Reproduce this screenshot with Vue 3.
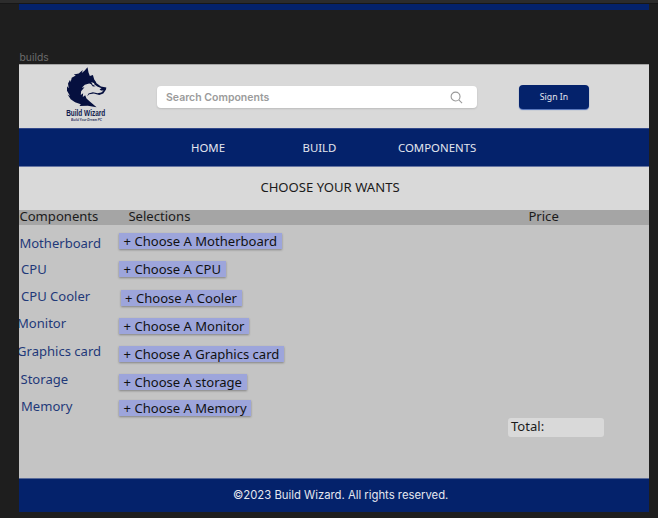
<script setup>
const links = ['HOME', 'BUILD', 'COMPONENTS']

const rows = [
  { label: 'Motherboard', choice: '+ Choose A Motherboard', labelStep: 26, chipStep: 27.5, labelX: 0.4, chipX: 0, chipW: 163 },
  { label: 'CPU', choice: '+ Choose A CPU', labelStep: 26.7, chipStep: 29, labelX: 2, chipX: 0, chipW: 107 },
  { label: 'CPU Cooler', choice: '+ Choose A Cooler', labelStep: 27.6, chipStep: 28, labelX: 2, chipX: 1.5, chipW: 121 },
  { label: 'Monitor', choice: '+ Choose A Monitor', labelStep: 28.2, chipStep: 28, labelX: -2, chipX: 0, chipW: 130 },
  { label: 'Graphics card', choice: '+ Choose A Graphics card', labelStep: 28, chipStep: 28, labelX: -2, chipX: 0, chipW: 165 },
  { label: 'Storage', choice: '+ Choose A storage', labelStep: 26.6, chipStep: 26.7, labelX: 1.5, chipX: 0, chipW: 128 },
  { label: 'Memory', choice: '+ Choose A Memory', labelStep: 20, chipStep: 20, labelX: 2, chipX: 0, chipW: 132 },
]
</script>

<template>
  <div class="canvas">
    <div class="topline"></div>
    <div class="previous"></div>
    <div class="frame-name">builds</div>
    <main class="frame">
      <header class="header">
        <div class="logo">
          <svg class="wolf" viewBox="197 200 122 122" aria-hidden="true">
            <path fill="#06103f" d="M261 201 L264 216 L268 227 L277 224 L281 237 L287 246 L285 250 L272 245 L276 252 L266 249 L253 253 L244 262 L252 260 L242 272 L241 283 L248 278 L247 289 L254 284 L258 294 L267 302 L288 320 L262 315 L237 316 L241 311 L224 305 L211 296 L202 282 L209 286 L200 271 L200 257 L205 263 L203 249 L209 238 L211 245 L214 232 L226 225 L220 222 L235 219 L247 209 L244 218 L252 211 Z" />
            <path fill="#06103f" d="M281 240 L288 248 L301 258 L317 261 L316 267 L308 279 L296 283 L280 279 L266 281 L260 287 L264 279 L277 275 L291 278 L302 276 L309 270 L301 270 L297 266 L303 263 L290 258 L281 251 Z" />
            <path fill="#06103f" d="M270 249 L285 257 L277 258 Z" />
          </svg>
          <div class="brand">Build Wizard</div>
          <div class="motto">Build Your Dream PC</div>
        </div>
        <div class="search">
          <span>Search Components</span>
          <svg class="glass" viewBox="0 0 14 14" aria-hidden="true">
            <circle cx="6" cy="6" r="4.8" />
            <path d="M9.5 9.5 L13 13" />
          </svg>
        </div>
        <button class="signin">Sign In</button>
      </header>
      <nav class="nav">
        <a v-for="link in links" :key="link">{{ link }}</a>
      </nav>
      <h1 class="title">CHOOSE YOUR WANTS</h1>
      <div class="thead">
        <span>Components</span>
        <span>Selections</span>
        <span>Price</span>
      </div>
      <section class="body">
        <div class="labels">
          <div v-for="r in rows" :key="r.label" class="slot" :style="{ height: r.labelStep + 'px', marginLeft: r.labelX + 'px' }">{{ r.label }}</div>
        </div>
        <div class="chips">
          <div v-for="r in rows" :key="r.choice" class="slot" :style="{ height: r.chipStep + 'px', marginLeft: r.chipX + 'px' }">
            <span class="chip" :style="{ width: r.chipW + 'px' }">{{ r.choice }}</span>
          </div>
        </div>
        <div class="total">Total:</div>
      </section>
      <footer class="footer">©2023 Build Wizard. All rights reserved.</footer>
    </main>
  </div>
</template>

<style>
body { margin: 0; background: #1e1e1e; }
</style>

<style scoped>
.canvas { box-sizing: border-box; width: 658px; height: 518px; background: #1e1e1e; overflow: hidden; font-family: "Noto Sans", sans-serif; }
.topline { height: 3px; background: #2c2c2c; border-bottom: 1px solid #171717; }
.previous { width: 630px; height: 6px; margin-left: 19px; background: #04226b; }
.frame-name { height: 14px; margin: 40px 0 0 19.5px; font: 10.3px/14px Inter, sans-serif; color: #6c6c6c; }
.frame { display: flex; flex-direction: column; width: 630px; height: 448px; margin-left: 19px; background: #c4c4c4; overflow: hidden; }
.header { box-sizing: border-box; display: flex; height: 64px; background: #d9d9d9; border-top: 1px solid #a5a5a5; }
.logo { width: 44px; margin: 2px 0 0 45px; display: flex; flex-direction: column; align-items: center; white-space: nowrap; }
.wolf { width: 41px; height: 41px; flex: none; }
.brand { font: bold 8.5px/10px "Liberation Sans", sans-serif; color: #101b4d; transform: scaleX(.76); margin-top: 0; }
.motto { font: italic bold 3.5px/5px "Liberation Sans", sans-serif; color: #2c3562; transform: scaleX(.88); margin-left: 2px; }
.search { box-sizing: border-box; display: flex; align-items: center; justify-content: space-between; width: 320px; height: 22px; margin: 21px 0 0 49px; padding: 0 14px 0 9px; background: #fff; border-radius: 4px; box-shadow: 0 1px 2px #0002; font: 600 10.5px/22px Inter, sans-serif; color: #9b9b9b; }
.search span { padding-top: 1px; }
.glass { width: 13px; height: 13px; fill: none; stroke: #999; stroke-width: 1.2; }
.signin { width: 70px; height: 24px; margin: 20px 0 0 42px; padding: 0; border: 0; border-radius: 4px; background: #04226b; box-shadow: 0 1px 1px #4c6dba; color: #e4e7ef; font: 8.7px/24px "Noto Sans", sans-serif; }
.nav { box-sizing: border-box; display: grid; grid-template-columns: 111.5px 95.5px 1fr; height: 39px; padding-left: 172px; background: #04226b; border-top: 1px solid #32488a; border-bottom: 1px solid #6675a2; color: #e4e7ef; font-size: 11.4px; line-height: 37px; }
.title { height: 43px; margin: 0; padding-right: 8px; background: #d9d9d9; text-align: center; font-weight: 400; font-size: 13.1px; line-height: 40px; color: #1b1b1b; }
.thead { display: grid; grid-template-columns: 109px 400px 1fr; height: 15px; padding-left: .4px; background: #a5a5a5; font-size: 13.1px; line-height: 13px; color: #1b1b1b; }
.body { display: flex; height: 253px; font-size: 13.05px; line-height: 18px; white-space: nowrap; }
.labels { width: 100px; padding-top: 9px; color: #1f3979; }
.chips { width: 389px; padding-top: 8px; color: #111; }
.chip { box-sizing: border-box; display: block; height: 16px; padding-left: 4.6px; line-height: 16px; background: #9da5db; box-shadow: 0 1px 2px #0005; }
.total { box-sizing: border-box; width: 96px; height: 19px; margin-top: 193px; padding-left: 3px; border-radius: 3px; background: #d9d9d9; line-height: 16px; color: #1b1b1b; }
.footer { box-sizing: border-box; flex: 1; padding-left: 214px; background: #04226b; border-top: 1px solid #586a99; font: 11.3px/32px Inter, sans-serif; color: #e4e7ef; }
</style>
